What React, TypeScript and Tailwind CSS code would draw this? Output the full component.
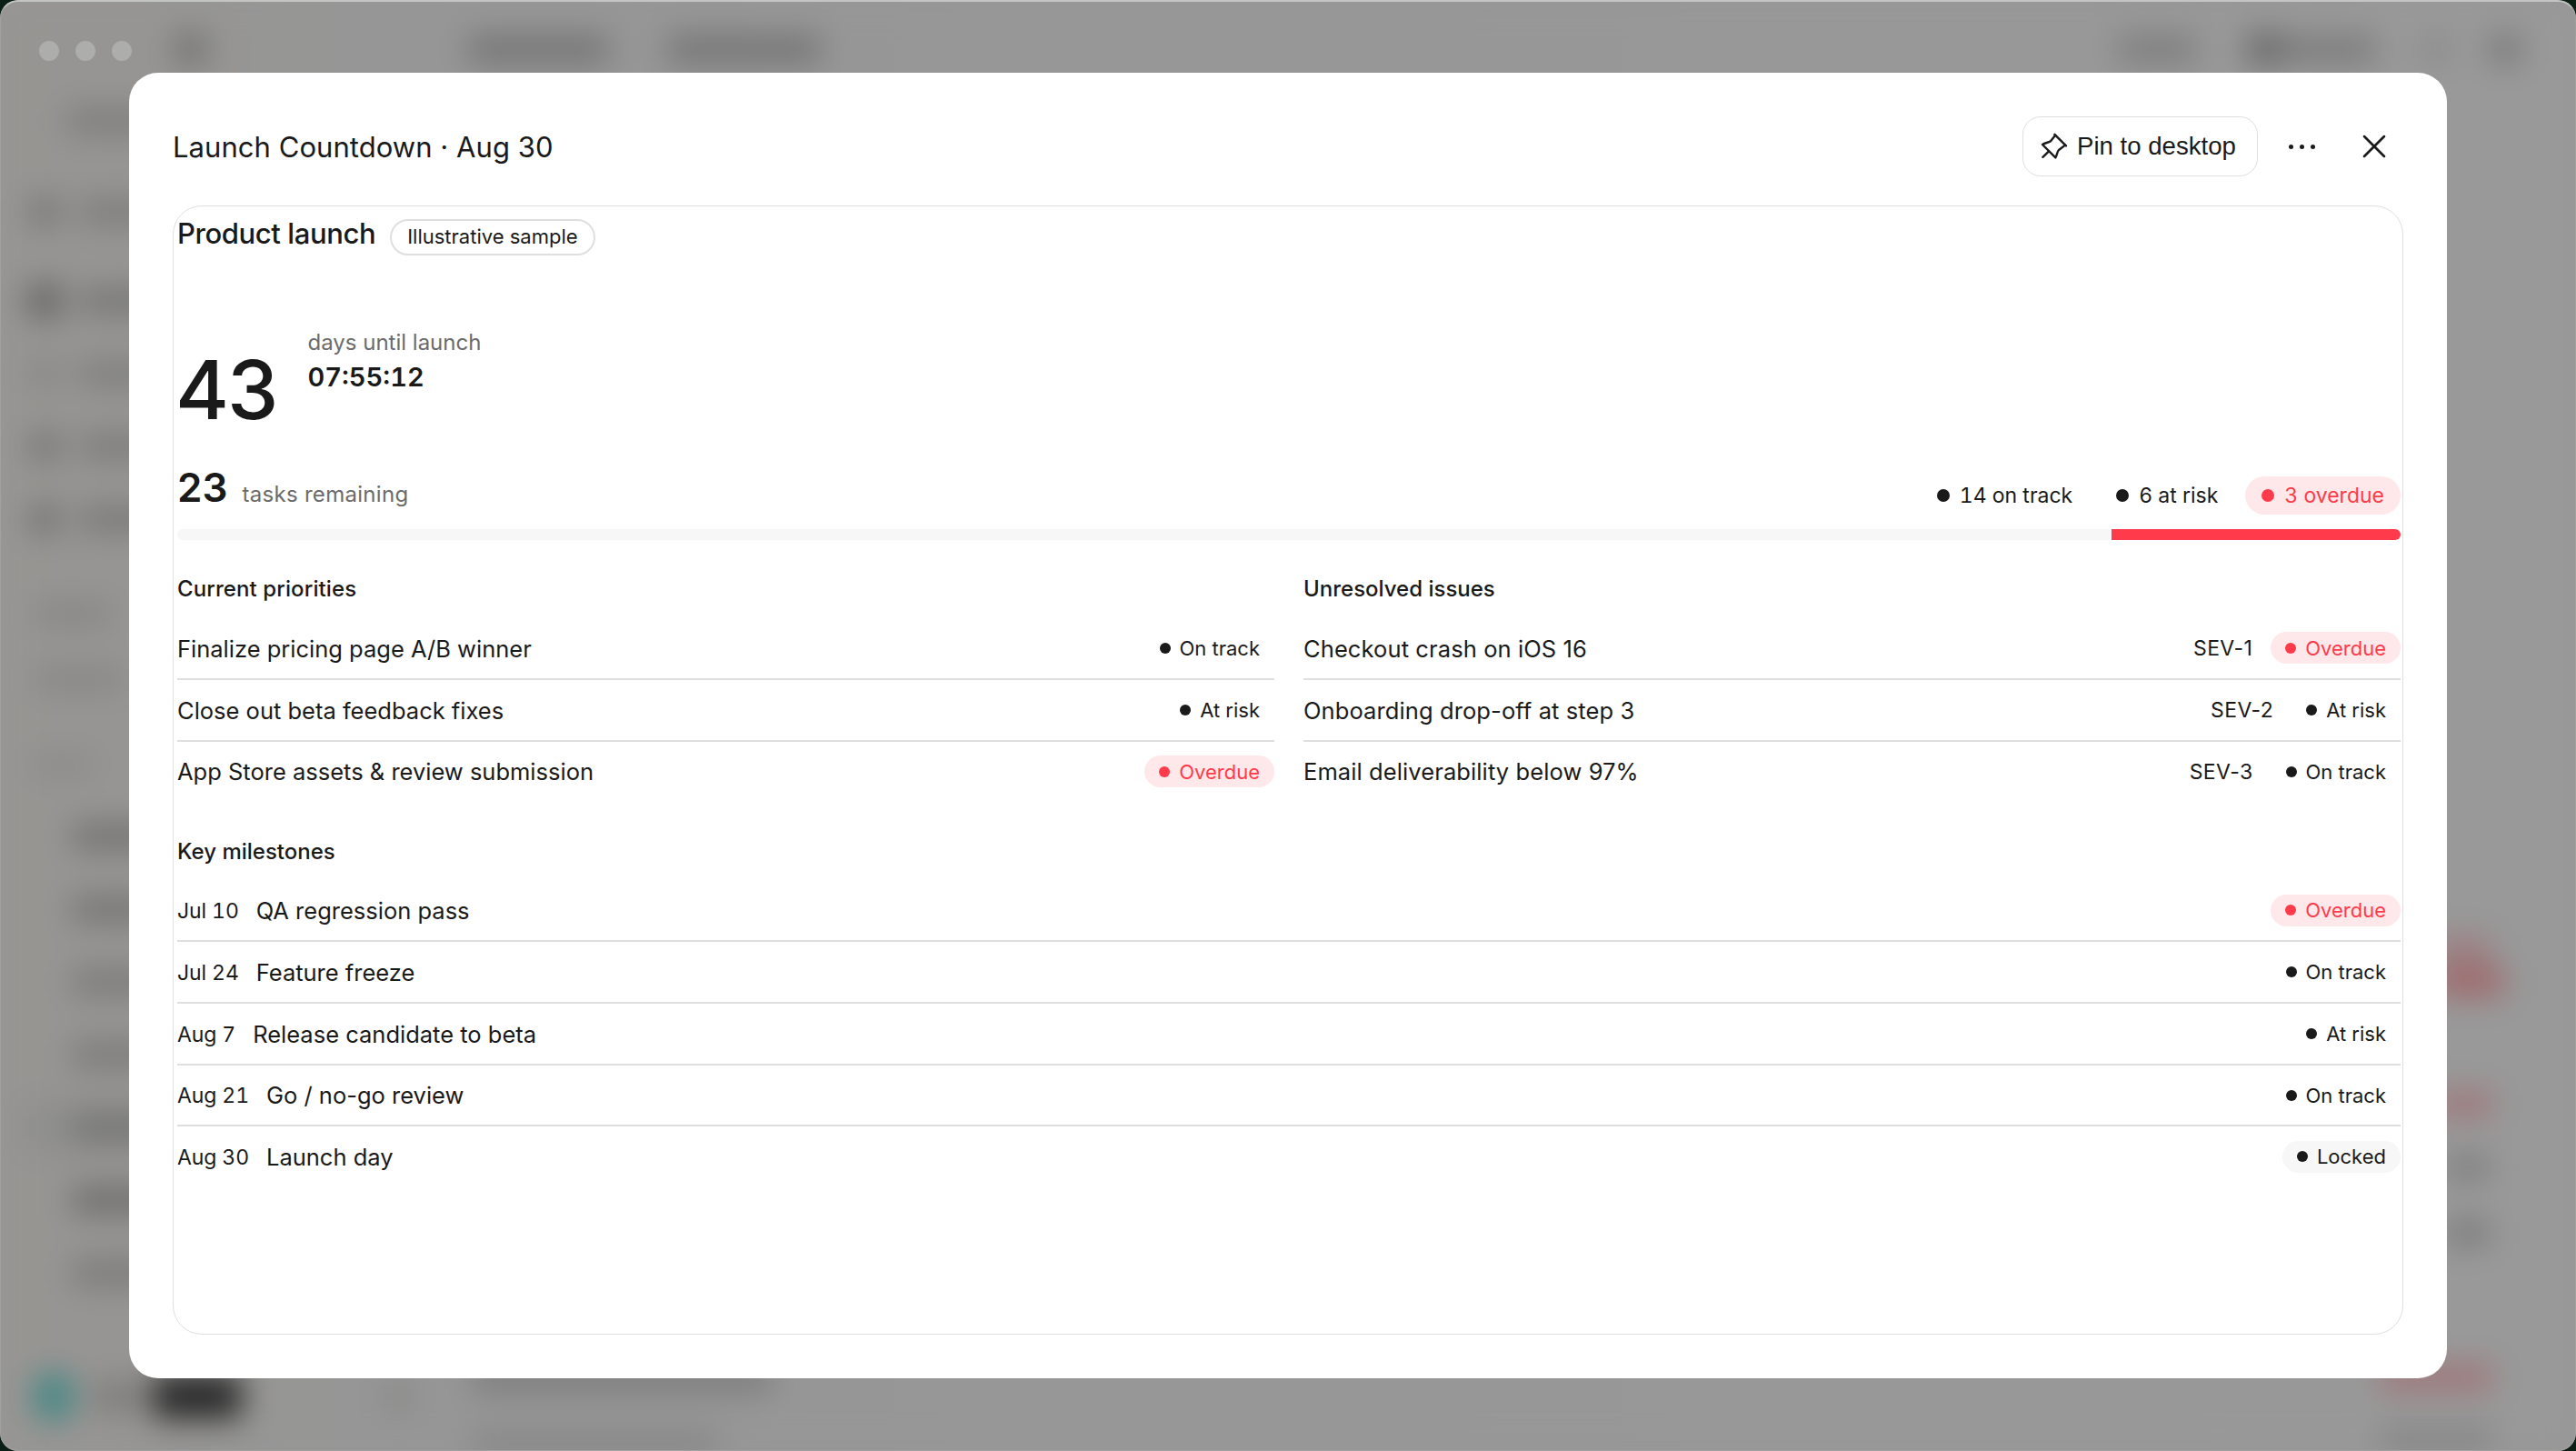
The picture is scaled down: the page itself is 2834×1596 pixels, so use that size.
import { X } from "lucide-react";

type Status = "On track" | "At risk" | "Overdue" | "Locked";

const priorities: { title: string; status: Status }[] = [
  { title: "Finalize pricing page A/B winner", status: "On track" },
  { title: "Close out beta feedback fixes", status: "At risk" },
  { title: "App Store assets & review submission", status: "Overdue" },
];

const issues: { title: string; sev: string; status: Status }[] = [
  { title: "Checkout crash on iOS 16", sev: "SEV-1", status: "Overdue" },
  { title: "Onboarding drop-off at step 3", sev: "SEV-2", status: "At risk" },
  { title: "Email deliverability below 97%", sev: "SEV-3", status: "On track" },
];

const milestones: { date: string; title: string; status: Status }[] = [
  { date: "Jul 10", title: "QA regression pass", status: "Overdue" },
  { date: "Jul 24", title: "Feature freeze", status: "On track" },
  { date: "Aug 7", title: "Release candidate to beta", status: "At risk" },
  { date: "Aug 21", title: "Go / no-go review", status: "On track" },
  { date: "Aug 30", title: "Launch day", status: "Locked" },
];

const statusTone: Record<Status, string> = {
  "On track": "text-[#1a1a1a]",
  "At risk": "text-[#1a1a1a]",
  Overdue: "bg-[#ffe8ea] text-[#ff3b4b]",
  Locked: "bg-[#f7f7f7] text-[#1a1a1a]",
};

function StatusChip({ status }: { status: Status }) {
  return (
    <span className={`flex h-[35px] items-center gap-2.5 rounded-full px-4 text-[22px] leading-none ${statusTone[status]}`}>
      <span className="h-3 w-3 rounded-full bg-current" />
      {status}
    </span>
  );
}

function SummaryChip({ label, overdue }: { label: string; overdue?: boolean }) {
  return (
    <span
      className={`flex h-[42px] items-center gap-[11px] rounded-full px-[18px] text-[23px] leading-none tabular-nums ${
        overdue ? "bg-[#ffe8ea] text-[#ff3b4b]" : "text-[#1a1a1a]"
      }`}
    >
      <span className="h-3.5 w-3.5 rounded-full bg-current" />
      {label}
    </span>
  );
}

function PinIcon() {
  return (
    <svg
      viewBox="0 0 30 30"
      className="h-[30px] w-[30px]"
      fill="none"
      stroke="currentColor"
      strokeWidth="2.4"
      strokeLinecap="round"
      strokeLinejoin="round"
    >
      <path d="M15.4 1.8 28 14.4" />
      <path d="M16.2 2.8 11 9.2C8.6 11 5 11 2 13L16.4 27.4C18.2 24.6 18 21 20 19L27 13.6" />
      <path d="M9 20.4 2.4 26.8" />
    </svg>
  );
}

const navItems = [
  { icon: "bg-[#737372]", label: "bg-[#7b7b7a]", gap: "mb-[18px]" },
  { icon: "bg-[#666665] scale-125", label: "bg-[#747473]", gap: "" },
  { icon: "bg-[#868685]", label: "bg-[#7d7d7c]", gap: "" },
  { icon: "bg-[#727271]", label: "bg-[#7a7a79]", gap: "" },
  { icon: "bg-[#6e6e6d]", label: "bg-[#777776]", gap: "" },
];

const recents = [
  { row: "", label: "bg-[#727271]" },
  { row: "", label: "bg-[#747473]" },
  { row: "", label: "bg-[#7a7a79]" },
  { row: "", label: "bg-[#7a7a79]" },
  { row: "bg-[#8f8f8e]", label: "bg-[#747473]" },
  { row: "", label: "bg-[#6c6c6b]" },
  { row: "", label: "bg-[#7a7a79]" },
];

// Dashboard behind the dialog, only visible as blurred shapes
function Backdrop() {
  return (
    <div className="absolute inset-0 overflow-hidden rounded-[20px] bg-[#979797]">
      <div className="flex h-full flex-col bg-linear-to-r from-[#979592] via-[#969696] via-15% to-[#999999] blur-[17px]">
        <div className="flex h-20 shrink-0 items-center pl-[192px] pr-[62px] pt-7">
          <span className="h-9 w-9 bg-[#747473]" />
          <span className="ml-[287px] h-[30px] w-[154px] bg-[#747474]" />
          <span className="ml-[66px] h-[30px] w-[168px] bg-[#747474]" />
          <span className="ml-auto h-7 w-[86px] bg-[#7c7c7c]" />
          <span className="ml-[56px] h-9 w-9 bg-[#6a6a6a]" />
          <span className="h-7 w-[106px] bg-[#7a7a7a]" />
          <span className="ml-[50px] h-7 w-8 bg-[#8a8a8a]" />
          <span className="ml-[44px] h-8 w-8 bg-[#777777]" />
        </div>

        <div className="flex flex-1 justify-between">
          <div className="w-[200px]">
            <div className="flex h-[113px] items-center pb-2 pl-[74px]">
              <span className="h-7 w-full bg-[#7d7d7c]" />
            </div>
            {navItems.map((item, i) => (
              <div key={i} className={`flex h-20 items-center gap-6 pl-[34px] ${item.gap}`}>
                <span className={`h-[30px] w-[30px] shrink-0 ${item.icon}`} />
                <span className={`h-[26px] w-full ${item.label}`} />
              </div>
            ))}
            <div className="flex h-[190px] flex-col gap-[52px] pl-10 pt-[54px]">
              <span className="h-5 w-[82px] bg-[#838382]" />
              <span className="h-5 w-[96px] bg-[#838382]" />
            </div>
            <div className="flex h-[88px] items-center pb-2 pl-9">
              <span className="h-[18px] w-[66px] bg-[#888887]" />
            </div>
            {recents.map((item, i) => (
              <div key={i} className={`ml-6 flex h-[62px] items-center pl-[56px] mb-[18px] ${item.row}`}>
                <span className={`h-7 w-full ${item.label}`} />
              </div>
            ))}
          </div>
          <div className="flex w-[154px] flex-col items-start pt-[950px]">
            <span className="h-[30px] w-[60px] bg-[#9c7c7f]" />
            <span className="mt-1 h-8 w-[74px] bg-[#9f686a]" />
            <span className="mt-[104px] h-7 w-[62px] bg-[#9f7679]" />
            <span className="ml-3 mt-[44px] h-6 w-[46px] bg-[#7a7a7a]" />
            <span className="ml-3 mt-[46px] h-7 w-[46px] bg-[#7a7a7a]" />
          </div>
        </div>

        <div className="flex h-24 shrink-0 items-start pl-9 pr-[92px]">
          <span className="mt-2 h-14 w-[46px] rounded-full bg-[#478886]" />
          <span className="ml-[22px] mt-5 h-8 w-[50px] bg-[#7b7b7a]" />
          <span className="ml-3.5 mt-3 h-12 w-[98px] rounded-lg bg-[#282828]" />
          <span className="ml-[158px] mt-5 h-8 w-7 bg-[#888887]" />
          <div className="ml-[68px] flex flex-col gap-11 pt-1">
            <span className="h-[26px] w-[330px] bg-[#7a7a7a]" />
            <span className="h-[26px] w-[270px] bg-[#868686]" />
          </div>
          <div className="ml-auto flex flex-col gap-10">
            <span className="h-[30px] w-[124px] bg-[#9f7679]" />
            <span className="h-6 w-[124px] bg-[#848484]" />
          </div>
        </div>
      </div>
      <div className="absolute inset-0 flex gap-[18px] rounded-[20px] border border-t-2 border-[#a1a1a0] border-t-[#c3c5c3] pl-[42px] pt-[43px]">
        <span className="h-[22px] w-[22px] rounded-full bg-[#adadab]" />
        <span className="h-[22px] w-[22px] rounded-full bg-[#adadab]" />
        <span className="h-[22px] w-[22px] rounded-full bg-[#adadab]" />
      </div>
    </div>
  );
}

export default function App() {
  return (
    <div className="relative h-[1596px] w-[2834px] overflow-hidden bg-[#0b1f14] px-[142px] pt-20 font-['Inter',sans-serif] text-[#1a1a1a]">
      <Backdrop />

      <div className="relative flex h-[1436px] w-[2550px] flex-col rounded-[32px] bg-white px-12 pb-12">
        <header className="flex h-[146px] shrink-0 items-center justify-between pt-4">
          <h1 className="text-[31px] leading-none tracking-[0.05px]">Launch Countdown · Aug 30</h1>
          <div className="-mr-2 flex items-center">
            <button className="flex h-[66px] w-[259px] items-center gap-2.5 rounded-[20px] border border-[#dfdfdf] pl-[19px] font-['Liberation_Sans',sans-serif] text-[27.6px]">
              <PinIcon />
              Pin to desktop
            </button>
            <button className="ml-2 flex h-20 w-20 items-center justify-center gap-[7px]">
              <span className="h-[5px] w-[5px] rounded-full bg-current" />
              <span className="h-[5px] w-[5px] rounded-full bg-current" />
              <span className="h-[5px] w-[5px] rounded-full bg-current" />
            </button>
            <button className="flex h-20 w-20 items-center justify-center">
              <X className="h-11 w-11" strokeWidth={1.4} />
            </button>
          </div>
        </header>

        <section className="flex-1 rounded-[32px] border border-[#dfdfdf] pl-1 pr-0.5">
          <div className="flex h-16 items-center gap-4">
            <h2 className="pb-1.5 text-[31px] font-medium leading-none tracking-[-0.4px]">Product launch</h2>
            <span className="mt-1 flex h-10 items-center rounded-full border-2 border-[#dfdfdf] px-[17px] pb-0.5 text-[22px] leading-none">
              Illustrative sample
            </span>
          </div>

          <div className="mt-[68px] flex h-[110px] gap-8">
            <div className="-ml-0.5 pr-0.5 pt-[25px] text-[90px] font-medium leading-none tracking-[-2px]">43</div>
            <div className="pt-px">
              <p className="text-[24px] leading-[34px] text-[#6b6b6b]">days until launch</p>
              <p className="text-[29px] font-semibold leading-[42px] tabular-nums">07:55:12</p>
            </div>
          </div>

          <div className="mt-[43px] flex h-[66px] items-center justify-between">
            <div className="-mt-3.5 flex items-baseline gap-4">
              <span className="text-[44px] font-semibold leading-none">23</span>
              <span className="text-[24px] tracking-[0.3px] text-[#6b6b6b]">tasks remaining</span>
            </div>
            <div className="flex items-center gap-3">
              <SummaryChip label="14 on track" />
              <SummaryChip label="6 at risk" />
              <SummaryChip label="3 overdue" overdue />
            </div>
          </div>

          <div className="mt-1 flex h-3 justify-end overflow-hidden rounded-full bg-[#f7f7f7]">
            <div className="w-[13%] bg-[#ff3b4b]" />
          </div>

          <div className="mt-[34px] grid grid-cols-2 gap-8">
            <div>
              <h3 className="text-[24px] font-medium leading-10 tracking-[0.1px]">Current priorities</h3>
              <ul className="mt-3 divide-y-2 divide-[#dfdfdf]">
                {priorities.map((item) => (
                  <li key={item.title} className="flex h-[67.8px] items-center justify-between text-[25.5px] last:h-[66px]">
                    <span className="pt-0.5">{item.title}</span>
                    <StatusChip status={item.status} />
                  </li>
                ))}
              </ul>
            </div>
            <div>
              <h3 className="text-[24px] font-medium leading-10">Unresolved issues</h3>
              <ul className="mt-3 divide-y-2 divide-[#dfdfdf]">
                {issues.map((item) => (
                  <li key={item.title} className="flex h-[67.8px] items-center text-[25.5px] last:h-[66px]">
                    <span className="flex-1 pt-0.5 tracking-[0.1px]">{item.title}</span>
                    <span className="mr-5 pt-px text-[23px] tracking-[0.4px]">{item.sev}</span>
                    <StatusChip status={item.status} />
                  </li>
                ))}
              </ul>
            </div>
          </div>

          <h3 className="mt-[35px] text-[24px] font-medium leading-10">Key milestones</h3>
          <ul className="mt-3 divide-y-2 divide-[#dfdfdf]">
            {milestones.map((item) => (
              <li key={item.title} className="flex h-[67.7px] items-center text-[25.5px] last:h-[66px]">
                <span className="mr-[19px] pt-0.5 text-[23px] tabular-nums tracking-[-0.1px]">{item.date}</span>
                <span className="flex-1 pt-0.5">{item.title}</span>
                <StatusChip status={item.status} />
              </li>
            ))}
          </ul>
        </section>
      </div>
    </div>
  );
}
